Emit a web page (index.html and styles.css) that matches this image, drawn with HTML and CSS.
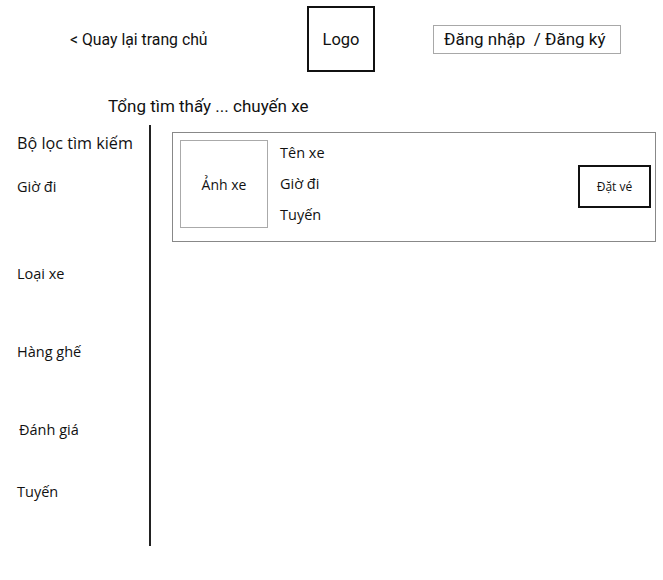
FILE: index.html
```html
<!DOCTYPE html>
<html lang="vi">
<head>
<meta charset="utf-8">
<title>Tìm chuyến xe</title>
<link rel="stylesheet" href="styles.css">
</head>
<body>
<header class="topbar">
  <a class="back" href="#">&lt; Quay lại trang chủ</a>
  <div class="logo">Logo</div>
  <div class="auth">Đăng nhập &nbsp;/ Đăng ký</div>
</header>
<h1 class="total">Tổng tìm thấy ... chuyến xe</h1>
<main class="main">
  <aside class="filters">
    <h2 class="filters-title">Bộ lọc tìm kiếm</h2>
    <div class="f f-time">Giờ đi</div>
    <div class="f f-type">Loại xe</div>
    <div class="f f-seat">Hàng ghế</div>
    <div class="f f-rate">Đánh giá</div>
    <div class="f f-route">Tuyến</div>
  </aside>
  <section class="results">
    <div class="card">
      <div class="thumb">Ảnh xe</div>
      <div class="info">
        <div>Tên xe</div>
        <div>Giờ đi</div>
        <div>Tuyến</div>
      </div>
      <button class="book">Đặt vé</button>
    </div>
  </section>
</main>
</body>
</html>
```
FILE: styles.css
```css
* { box-sizing: border-box; }
body {
  margin: 0;
  background: #fff;
  color: #111;
  font-family: "Open Sans", "Noto Sans", sans-serif;
}
.topbar {
  display: flex;
  align-items: center;
  padding: 6px 0 0 70px;
  font-family: "Roboto", "Liberation Sans", sans-serif;
}
.back {
  width: 237px;
  color: #111;
  text-decoration: none;
  font-size: 15.8px;
}
.logo {
  width: 68px;
  height: 66px;
  border: 2px solid #111;
  display: flex;
  align-items: center;
  justify-content: center;
  font-size: 16.5px;
  color: #111;
}
.auth {
  margin-left: 58px;
  width: 188px;
  height: 29px;
  border: 1px solid #a8a8a8;
  padding-left: 10px;
  display: flex;
  align-items: center;
  font-size: 17px;
}
.total {
  margin: 22px 0 0 108px;
  font-family: "Roboto", "Liberation Sans", sans-serif;
  font-size: 17px;
  font-weight: normal;
  line-height: 24px;
}
.main {
  display: flex;
  margin-top: 7px;
}
.filters {
  width: 151px;
  height: 421px;
  border-right: 2px solid #222;
  padding: 7px 0 0 17px;
}
.filters-title {
  margin: 0;
  font-size: 16.2px;
  font-weight: normal;
  line-height: 22px;
}
.f {
  font-size: 14.5px;
  line-height: 20px;
}
.f-time { margin-top: 23px; }
.f-type { margin-top: 67px; }
.f-seat { margin-top: 58px; }
.f-rate { margin-top: 58px; padding-left: 2px; }
.f-route { margin-top: 42px; }
.results {
  padding: 7px 0 0 21px;
}
.card {
  width: 484px;
  height: 110px;
  border: 1px solid #888;
  display: flex;
  align-items: flex-start;
  padding: 7px 0 0 7px;
}
.thumb {
  width: 88px;
  height: 88px;
  border: 1px solid #aaa;
  display: flex;
  align-items: center;
  justify-content: center;
  font-size: 14px;
}
.info {
  margin-left: 12px;
  font-size: 14.5px;
  line-height: 20px;
  display: flex;
  flex-direction: column;
  gap: 11px;
  padding-top: 3px;
}
.book {
  margin: 25px 0 0 auto;
  margin-right: 4px;
  width: 73px;
  height: 43px;
  border: 2px solid #111;
  background: #fff;
  font-family: "Open Sans", sans-serif;
  font-size: 12px;
  color: #111;
  padding: 0;
}
```
